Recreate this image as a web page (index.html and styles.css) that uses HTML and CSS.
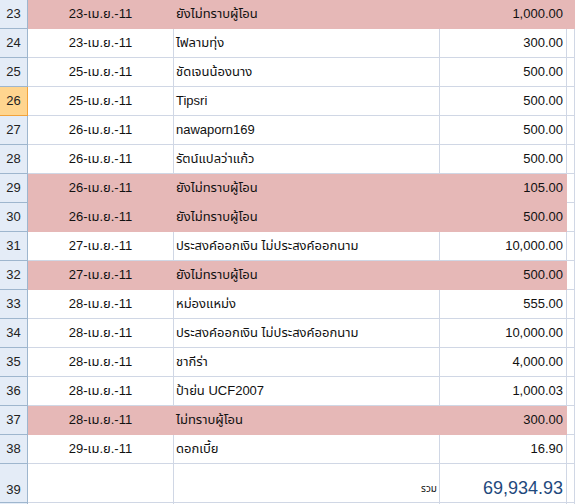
FILE: index.html
```html
<!DOCTYPE html>
<html lang="th">
<head>
<meta charset="utf-8">
<link rel="stylesheet" href="styles.css">
</head>
<body>
<div class="sheet">
  <div class="row first pink"><div class="rh">23</div><div class="c date">23-เม.ย.-11</div><div class="c name">ยังไม่ทราบผู้โอน</div><div class="c amt">1,000.00</div><div class="c ext"></div></div>
  <div class="row"><div class="rh">24</div><div class="c date">23-เม.ย.-11</div><div class="c name">ไฟลามทุ่ง</div><div class="c amt">300.00</div><div class="c ext"></div></div>
  <div class="row"><div class="rh">25</div><div class="c date">25-เม.ย.-11</div><div class="c name">ชัดเจนน้องนาง</div><div class="c amt">500.00</div><div class="c ext"></div></div>
  <div class="row"><div class="rh sel">26</div><div class="c date">25-เม.ย.-11</div><div class="c name">Tipsri</div><div class="c amt">500.00</div><div class="c ext"></div></div>
  <div class="row"><div class="rh">27</div><div class="c date">26-เม.ย.-11</div><div class="c name">nawaporn169</div><div class="c amt">500.00</div><div class="c ext"></div></div>
  <div class="row"><div class="rh">28</div><div class="c date">26-เม.ย.-11</div><div class="c name">รัตน์แปลว่าแก้ว</div><div class="c amt">500.00</div><div class="c ext"></div></div>
  <div class="row pink"><div class="rh">29</div><div class="c date">26-เม.ย.-11</div><div class="c name">ยังไม่ทราบผู้โอน</div><div class="c amt">105.00</div><div class="c ext"></div></div>
  <div class="row pink"><div class="rh">30</div><div class="c date">26-เม.ย.-11</div><div class="c name">ยังไม่ทราบผู้โอน</div><div class="c amt">500.00</div><div class="c ext"></div></div>
  <div class="row"><div class="rh">31</div><div class="c date">27-เม.ย.-11</div><div class="c name">ประสงค์ออกเงิน ไม่ประสงค์ออกนาม</div><div class="c amt">10,000.00</div><div class="c ext"></div></div>
  <div class="row pink"><div class="rh">32</div><div class="c date">27-เม.ย.-11</div><div class="c name">ยังไม่ทราบผู้โอน</div><div class="c amt">500.00</div><div class="c ext"></div></div>
  <div class="row"><div class="rh">33</div><div class="c date">28-เม.ย.-11</div><div class="c name">หม่องแหม่ง</div><div class="c amt">555.00</div><div class="c ext"></div></div>
  <div class="row"><div class="rh">34</div><div class="c date">28-เม.ย.-11</div><div class="c name">ประสงค์ออกเงิน ไม่ประสงค์ออกนาม</div><div class="c amt">10,000.00</div><div class="c ext"></div></div>
  <div class="row"><div class="rh">35</div><div class="c date">28-เม.ย.-11</div><div class="c name">ชากีร่า</div><div class="c amt">4,000.00</div><div class="c ext"></div></div>
  <div class="row"><div class="rh">36</div><div class="c date">28-เม.ย.-11</div><div class="c name">ป้าย่น UCF2007</div><div class="c amt">1,000.03</div><div class="c ext"></div></div>
  <div class="row pink"><div class="rh">37</div><div class="c date">28-เม.ย.-11</div><div class="c name">ไม่ทราบผู้โอน</div><div class="c amt">300.00</div><div class="c ext"></div></div>
  <div class="row"><div class="rh">38</div><div class="c date">29-เม.ย.-11</div><div class="c name">ดอกเบี้ย</div><div class="c amt">16.90</div><div class="c ext"></div></div>
  <div class="row total"><div class="rh">39</div><div class="c date"></div><div class="c name label">รวม</div><div class="c amt sum">69,934.93</div><div class="c ext"></div></div>
  <div class="row"><div class="rh"></div><div class="c date"></div><div class="c name"></div><div class="c amt"></div><div class="c ext"></div></div>
</div>
</body>
</html>
```
FILE: styles.css
```css
html, body {
  margin: 0;
  padding: 0;
  background: #ffffff;
}
body {
  font-family: "Liberation Sans", Tahoma, "Noto Sans Thai", "Noto Sans", sans-serif;
  font-size: 13px;
  color: #111111;
  overflow: hidden;
}
.sheet {
  display: flex;
  flex-direction: column;
  width: 575px;
}
.row {
  display: grid;
  grid-template-columns: 28px 146px 266px 127px 1fr;
  height: 29px;
}
.row.total {
  height: 39px;
}
.rh, .c {
  box-sizing: border-box;
  border-right: 1px solid #D0D7E5;
  border-bottom: 1px solid #D0D7E5;
  display: flex;
  align-items: flex-end;
  padding-bottom: 6px;
  line-height: 16px;
  white-space: nowrap;
  overflow: hidden;
}
.rh {
  background: #E4ECF7;
  border-right-color: #9EB6CE;
  border-bottom-color: #9EB6CE;
  justify-content: center;
  color: #222222;
}
.rh.sel {
  background: #FFD58F;
  border-right-color: #F2A33B;
  border-bottom-color: #F2A33B;
}
.date {
  justify-content: center;
}
.name {
  padding-left: 2px;
}
.amt {
  justify-content: flex-end;
  padding-right: 3px;
}
.pink .c {
  background: #E6B8B7;
  border-color: #E6B8B7;
}
.pink .c.ext {
  background: #ffffff;
  border-right-color: #D0D7E5;
  border-bottom-color: #D0D7E5;
}
.row.first .c.ext {
  background: #E6B8B7;
  border-color: #E6B8B7;
}
.label {
  justify-content: flex-end;
  font-size: 10px;
  padding-right: 2px;
  padding-bottom: 5px;
}
.sum {
  font-size: 18px;
  line-height: 20px;
  color: #1F497D;
  padding-bottom: 4px;
}
.total .rh {
  padding-bottom: 4px;
}
```
